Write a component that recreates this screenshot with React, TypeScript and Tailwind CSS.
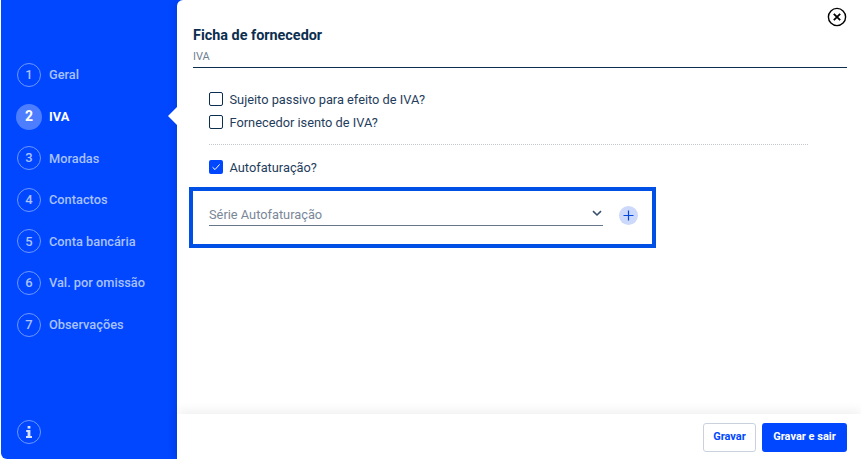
import React from 'react';

const steps = ['Geral', 'IVA', 'Moradas', 'Contactos', 'Conta bancária', 'Val. por omissão', 'Observações'];

const Checkbox: React.FC<{ label: string; checked?: boolean; className?: string }> = ({ label, checked, className }) => (
  <div className={`flex items-center gap-[6.5px] h-[20px] ${className ?? ''}`}>
    {checked ? (
      <span className="flex items-center justify-center w-[14px] h-[14px] rounded-[2px] bg-[#0047ff]">
        <svg width="10" height="10" viewBox="0 0 10 10" fill="none" stroke="#ffffff" strokeWidth="1">
          <path d="M1.5 5.2 4 7.6 8.6 2.4" />
        </svg>
      </span>
    ) : (
      <span className="w-[14px] h-[14px] rounded-[2px] border border-[#0b2e4f] bg-white" />
    )}
    <span className="mt-[2px] text-[12.8px] leading-[20px] text-[#1f3d5c]">{label}</span>
  </div>
);

export default function App() {
  return (
    <div className="flex w-[861px] h-[459px] overflow-hidden bg-white font-['Roboto',sans-serif]">
      <aside className="ml-px flex w-[184px] shrink-0 flex-col bg-[#0047ff] pl-4 pt-[63px] pb-[15px] rounded-bl-[6px]">
        <ul className="flex flex-col gap-[17.6px]">
          {steps.map((step, i) => {
            const active = i === 1;
            return (
              <li key={step} className="flex items-center gap-[8px] h-[24px]">
                {active ? (
                  <span className="flex h-[26px] w-[26px] -mx-px items-center justify-center rounded-full bg-[#4d7eff] text-[14px] font-bold text-white">
                    {i + 1}
                  </span>
                ) : (
                  <span className="flex h-[24px] w-[24px] items-center justify-center rounded-full border border-[#6f97ff] text-[13px] font-medium text-[#a9c1ff]">
                    {i + 1}
                  </span>
                )}
                <span className={active ? 'text-[12.8px] font-bold text-white' : 'text-[12.8px] font-medium text-[#a9c1ff]'}>
                  {step}
                </span>
              </li>
            );
          })}
        </ul>
        <div className="mt-auto flex h-[24px] w-[24px] items-center justify-center rounded-full border border-[#6f97ff]">
          <svg width="8" height="12" viewBox="0 0 8 12" fill="#d5e0ff">
            <rect x="2.6" y="0" width="2.8" height="2.6" />
            <path d="M1.2 4h4.2v6H7v2H1v-2h1.6V6H1.2z" />
          </svg>
        </div>
      </aside>

      <main className="relative -ml-[8px] flex flex-1 flex-col rounded-tl-[6px] bg-white shadow-[-3px_0_6px_rgba(0,20,90,0.14)]">
        <span className="absolute left-[-9px] top-[107px] h-0 w-0 border-y-[9px] border-r-[9px] border-y-transparent border-r-white" />
        <button className="absolute right-[14px] top-[7px] text-black">
          <svg width="20" height="20" viewBox="0 0 20 20" fill="none" stroke="currentColor">
            <circle cx="10" cy="10" r="8.6" strokeWidth="1.4" />
            <path d="M6.8 6.8l6.4 6.4M13.2 6.8l-6.4 6.4" strokeWidth="1.8" />
          </svg>
        </button>

        <div className="flex-1 pl-4 pr-[14px] pt-[27px]">
          <header className="border-b border-[#0b2e4f] pb-[3px]">
            <h1 className="text-[14.4px] leading-[17px] font-bold text-[#0b2e4f]">Ficha de fornecedor</h1>
            <p className="mt-[6px] text-[11px] leading-[14px] text-[#6f7f92]">IVA</p>
          </header>

          <div className="pl-4 pt-[21px]">
            <div className="mr-[39px] border-b border-dotted border-[#c4c9d0] pb-[12px]">
              <Checkbox label="Sujeito passivo para efeito de IVA?" />
              <Checkbox label="Fornecedor isento de IVA?" className="mt-[3px]" />
            </div>
            <Checkbox label="Autofaturação?" checked className="mt-[12px]" />
          </div>

          <div className="mt-[10px] ml-[-4px] flex h-[61px] w-[467px] items-start border-4 border-[#0050e6] pl-4 pr-[14px]">
            <div className="flex h-[35px] flex-1 items-end justify-between border-b border-[#68768a] pr-px">
              <span className="text-[12.8px] leading-[20px] text-[#7a8797]">Série Autofaturação</span>
              <svg width="10" height="7" viewBox="0 0 10 7" fill="none" stroke="#38506c" strokeWidth="1.6" className="mb-[8px]">
                <path d="M1 1.2 5 5l4-3.8" />
              </svg>
            </div>
            <span className="ml-[16px] mt-[15px] flex h-[19px] w-[19px] items-center justify-center rounded-full bg-[#ccd9fb]">
              <svg width="11" height="11" viewBox="0 0 11 11" stroke="#0047e0" strokeWidth="1.2">
                <path d="M5.5 .5v10M.5 5.5h10" />
              </svg>
            </span>
          </div>
        </div>

        <footer className="flex h-[45px] items-center justify-end gap-[6px] bg-white pr-[14px] pt-[2px] shadow-[0_-4px_10px_rgba(0,0,0,0.06)]">
          <button className="h-[29px] w-[53px] rounded-[3px] border border-[#c9d2dc] bg-white text-[11px] font-bold text-[#0047ff]">
            Gravar
          </button>
          <button className="h-[29px] w-[85px] rounded-[3px] bg-[#0047ff] text-[11px] font-bold text-white">
            Gravar e sair
          </button>
        </footer>
      </main>
    </div>
  );
}
